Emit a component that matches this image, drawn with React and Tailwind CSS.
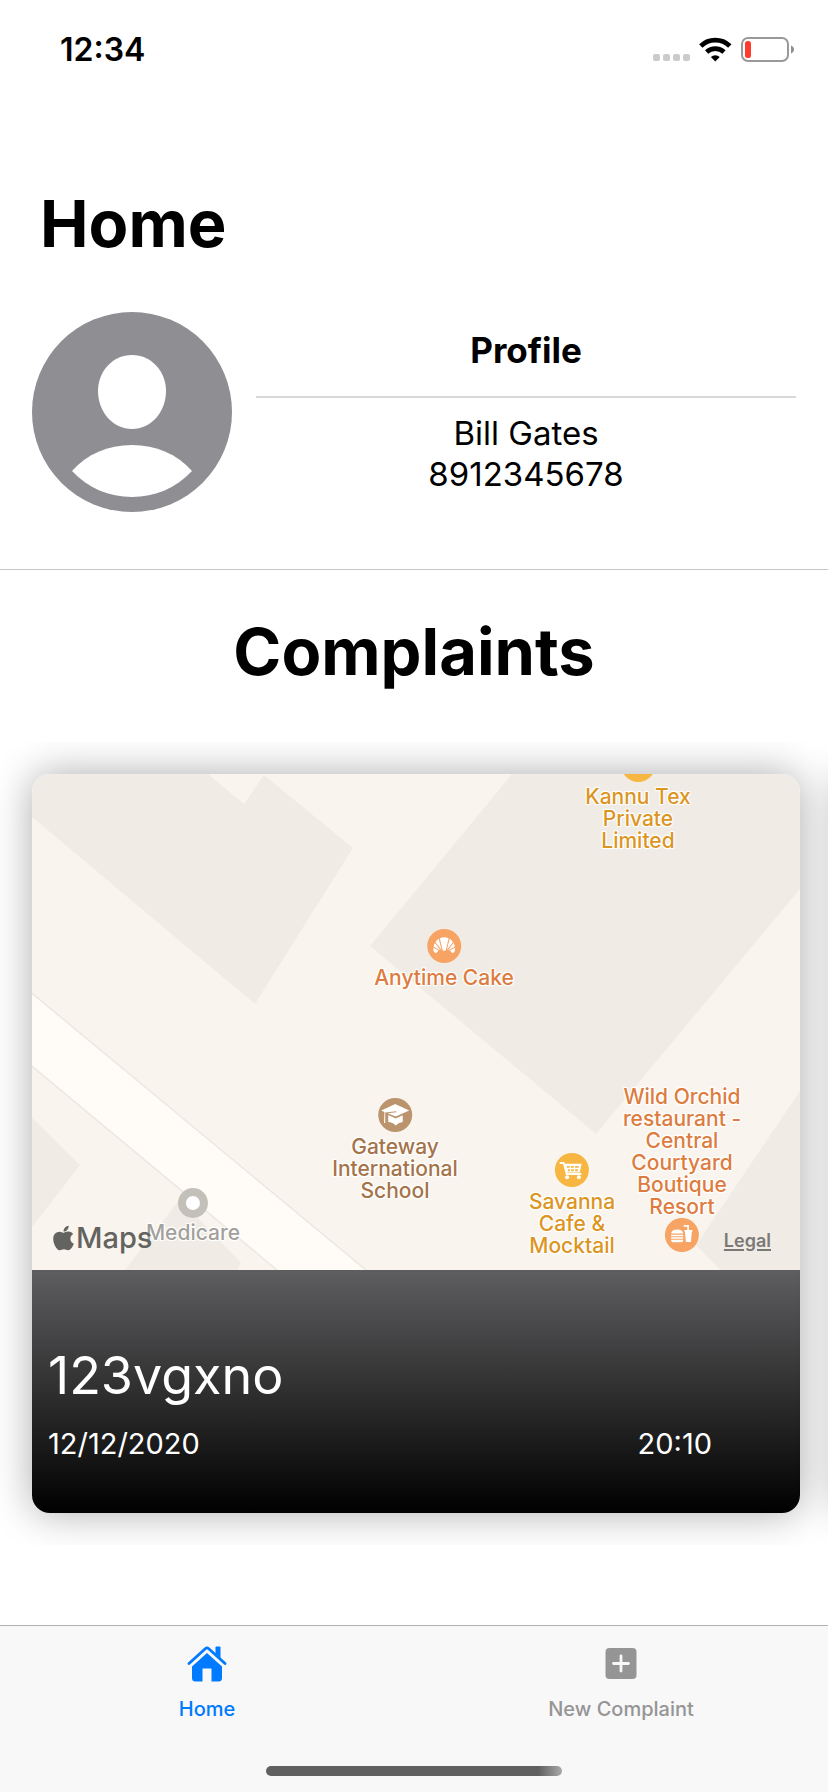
import React from "react";
import { FaApple } from "react-icons/fa";

function StatusBar() {
  return (
    <div className="flex h-[100px] items-center justify-between pl-[60px] pr-[34px]">
      <span className="text-[32px] leading-[36px] font-semibold">12:34</span>
      <svg className="h-[26px] w-[142px]" viewBox="0 1 142 26" role="img" aria-label="No signal, Wi-Fi, low battery">
        <g fill="#cbcbcb">
          <rect x="1" y="18" width="7" height="7" rx="2" />
          <rect x="11" y="18" width="7" height="7" rx="2" />
          <rect x="21" y="18" width="7" height="7" rx="2" />
          <rect x="31" y="18" width="7" height="7" rx="2" />
        </g>
        <g fill="none" stroke="#000" strokeWidth="4.8">
          <path d="M48.800 10a21 21 0 0 1 29 0" />
          <path d="M54.600 16a13 13 0 0 1 17.400 0" />
        </g>
        <path d="M63.300 25.500l-4.400-4.600a6.600 6.600 0 0 1 8.800 0z" />
        <rect x="90" y="2" width="46" height="23" rx="6" fill="none" stroke="#999" strokeWidth="2" />
        <path d="M139 9.500c4 1.600 4 6.400 0 8z" fill="#8f8f8f" />
        <rect x="93" y="5" width="6" height="17" rx="2.500" fill="#ff3b30" />
      </svg>
    </div>
  );
}

function Avatar() {
  return (
    <svg className="size-[200px] shrink-0" viewBox="0 0 200 200" role="img" aria-label="Profile picture">
      <circle cx="100" cy="100" r="100" fill="#8e8e93" />
      <path d="M100 43c19 0 34 16 34 36 0 21-15 38-34 38S66 100 66 79c0-20 15-36 34-36z" fill="#fff" />
      <path d="M40 159c15-17 36-26 60-26s45 9 60 26c-16 17-37 26-60 26s-44-9-60-26z" fill="#fff" />
    </svg>
  );
}

function CroissantGlyph() {
  return (
    <svg className="size-[34px]" viewBox="0 0 34 34" fill="#fff" aria-hidden="true">
      <path d="M12.600 9.300Q17 7.300 21.400 9.300L18.600 21.200Q17 22.200 15.400 21.200z" />
      <path d="M11.500 9.800L14.300 20.800 8.300 13.300q1-2.500 3.200-3.500zM22.500 9.800L19.700 20.800 25.700 13.300q-1-2.500-3.200-3.500z" />
      <path d="M7.700 14l5.700 7.400-6.900-3.600q0-2.300 1.200-3.800zM26.300 14l-5.700 7.400 6.900-3.600q0-2.300-1.200-3.800z" />
      <path d="M6.200 18.700l5 2.600q-1 2.700-2.700 2.900-2.900-1.500-2.300-5.500zM27.800 18.700L22.800 21.300q1 2.700 2.700 2.900 2.900-1.500 2.300-5.500z" />
    </svg>
  );
}

function CapGlyph() {
  return (
    <svg className="size-[34px]" viewBox="0 0 34 34" fill="#fff" aria-hidden="true">
      <path d="M17 6L31 12.500 17.500 18.500 9.500 15.200 18 14.200V13.200L7 14.400V25H5.800L6.200 14 3 12.500z" />
      <path d="M10 17l7.500 3.400 7-3.200V24q-4 .2-7 3.600-3-3.400-7.500-3.600z" />
    </svg>
  );
}

function CartGlyph() {
  return (
    <svg className="size-[34px]" viewBox="0 0 34 34" aria-hidden="true">
      <path d="M5.500 10h3.300l3 11h14" fill="none" stroke="#fff" strokeWidth="1.800" strokeLinecap="round" strokeLinejoin="round" />
      <path d="M9.500 10.700h17.200l-1.900 8.800H12z" fill="#fff" />
      <g stroke="#f7b641" strokeWidth="1.900">
        <path d="M12 13.900h2.600M16 13.900h2.800M20.200 13.900h3.600M13 17.300h2M16.200 17.300h2.600M20.200 17.300h2.800" />
      </g>
      <circle cx="12.200" cy="24.200" r="2" fill="#fff" />
      <circle cx="24" cy="24.200" r="2" fill="#fff" />
    </svg>
  );
}

function BurgerGlyph() {
  return (
    <svg className="size-[34px]" viewBox="0 0 34 34" fill="#fff" aria-hidden="true">
      <path d="M6.300 15.600q.5-4 6-4t6 4z" />
      <rect x="6" y="16.700" width="12.600" height="1.500" rx=".7" />
      <rect x="6" y="19.200" width="12.600" height="1.500" rx=".7" />
      <path d="M6.300 21.700h12v.8q0 1.700-1.700 1.700H8q-1.700 0-1.700-1.700z" />
      <path d="M19.500 12h8v1.600h-.5l-1 10.400h-5l-1-10.400h-.5z" />
      <path d="M18.800 7.900h4.400v4" fill="none" stroke="#fff" strokeWidth="1.700" />
    </svg>
  );
}

const halo =
  "[text-shadow:0_0_2px_#fff,1px_1px_1px_#fff,-1px_-1px_1px_#fff,1px_-1px_1px_#fff,-1px_1px_1px_#fff]";

function Place({ position, color, badge, glyph, lines, badgeLast = false }) {
  return (
    <div
      className={`absolute flex -translate-x-1/2 items-center ${badgeLast ? "flex-col-reverse" : "flex-col gap-1"} ${position}`}
    >
      <span className={`size-[34px] rounded-full ${badge}`}>{glyph}</span>
      <span className={`text-center text-[21px] leading-[22px] font-medium whitespace-nowrap ${halo} ${color}`}>
        {lines.map((line) => (
          <span key={line} className="block">
            {line}
          </span>
        ))}
      </span>
    </div>
  );
}

function MapView() {
  return (
    <div className="relative h-[496px] overflow-hidden bg-[#f9f5ee]">
      <svg className="block h-full w-full" viewBox="0 0 768 496" preserveAspectRatio="xMinYMin slice" aria-hidden="true">
        <g fill="#f0ece5">
          <path d="M0 0H176L212 30 232 1 321 74 223 230 0 43z" />
          <path d="M480 0H768V115L564 360 338 172z" />
          <path d="M768 317L664 471 688 496H768z" />
          <path d="M0 344L48 391 0 453z" />
          <path d="M93 496L148 425 209 489 205 496z" />
        </g>
        <path d="M-4 216L334 496H245L-4 289z" fill="#fffcf7" />
        <path d="M-4 216L334 496M-4 289L245 496" fill="none" stroke="#ece8e0" strokeWidth="1.500" />
      </svg>
      <Place position="left-[606px] -top-[26px]" color="text-[#dc951f]" badge="bg-[#f7b641]" lines={["Kannu Tex", "Private", "Limited"]} />
      <Place position="left-[412px] top-[155px]" color="text-[#dd7c3e]" badge="bg-[#f7a364]" glyph={<CroissantGlyph />} lines={["Anytime Cake"]} />
      <Place position="left-[363px] top-[324px]" color="text-[#a4734a]" badge="bg-[#bb946d]" glyph={<CapGlyph />} lines={["Gateway", "International", "School"]} />
      <Place position="left-[540px] top-[379px]" color="text-[#dc951f]" badge="bg-[#f7b641]" glyph={<CartGlyph />} lines={["Savanna", "Cafe &", "Mocktail"]} />
      <Place
        position="left-[650px] top-[312px]"
        color="text-[#dd7c3e]"
        badge="bg-[#f7a364]"
        glyph={<BurgerGlyph />}
        lines={["Wild Orchid", "restaurant -", "Central", "Courtyard", "Boutique", "Resort"]}
        badgeLast
      />
      <div className="absolute left-[161px] top-[414px] flex -translate-x-1/2 flex-col items-center gap-1">
        <span className="size-[30px] rounded-full border-8 border-[#c3c0ba] bg-white" />
        <span className={`text-[21px] leading-[22px] font-medium text-[#a3a09b] ${halo}`}>Medicare</span>
      </div>
      <div className="absolute bottom-[14px] left-[21px] flex items-center gap-[2px] text-[#63635f]">
        <FaApple className="h-7 w-[21px]" aria-hidden="true" />
        <span className="text-[29px] leading-[36px] font-medium">Maps</span>
      </div>
      <a href="#legal" className="absolute right-[29px] bottom-[18px] text-[18px] leading-[22px] font-semibold text-[#7b7975] underline decoration-2 underline-offset-2">
        Legal
      </a>
    </div>
  );
}

const cardFrame = "shrink-0 overflow-hidden rounded-[18px] shadow-[0_0_40px_rgba(0,0,0,0.33)]";

function ComplaintCard() {
  return (
    <article className={`w-[calc(100%-28px)] ${cardFrame}`}>
      <MapView />
      <div className="flex h-[243px] flex-col justify-end bg-linear-to-b/srgb from-[#5e5e60] to-black px-4 pb-[50px] text-white">
        <h3 className="text-[52px] leading-[66px]">123vgxno</h3>
        <div className="mt-4 flex justify-between pr-[72px] text-[29px] leading-[38px]">
          <span>12/12/2020</span>
          <span>20:10</span>
        </div>
      </div>
    </article>
  );
}

function HouseIcon() {
  return (
    <svg className="h-[36px] w-[40px]" viewBox="0 0 40 36" aria-hidden="true">
      <path d="M28.500 1.500q0-1 1-1h3q1 0 1 1V14l-5-4.500z" fill="currentColor" />
      <path d="M2 17.500L18.500 2.500q1.500-1.200 3 0L38 17.500" fill="none" stroke="currentColor" strokeWidth="2.800" strokeLinecap="round" />
      <path d="M20 7L35 20.500v11.500q0 3.500-3.500 3.500H24.500V22.500h-9v13H8.500Q5 35.500 5 32V20.500z" fill="currentColor" />
    </svg>
  );
}

function PlusIcon() {
  return (
    <svg className="h-[36px] w-[32px]" viewBox="0 0 32 36" aria-hidden="true">
      <rect x=".5" y="2" width="31" height="31" rx="4" fill="currentColor" />
      <path d="M16 10v15M8.500 17.500h15" stroke="#f8f8f8" strokeWidth="2.800" strokeLinecap="round" />
    </svg>
  );
}

function TabBar() {
  const tab = "flex flex-col items-center gap-[15px] pt-5 text-[20px] leading-[24px] font-medium";
  return (
    <footer className="mt-auto border-t border-[#b2b2b2] bg-[#f8f8f8]">
      <nav className="grid h-[140px] grid-cols-2">
        <button type="button" aria-current="page" className={`${tab} text-[#007aff]`}>
          <HouseIcon />
          Home
        </button>
        <button type="button" className={`${tab} text-[#959595]`}>
          <PlusIcon />
          New Complaint
        </button>
      </nav>
      <div className="flex h-[26px] items-start justify-center">
        <div className="h-[10px] w-[296px] rounded-full bg-linear-to-r from-[#606060] from-92% to-[#aaaaaa]" />
      </div>
    </footer>
  );
}

export default function App() {
  return (
    <div className="flex min-h-screen flex-col overflow-x-hidden bg-white font-['Inter','Liberation_Sans',sans-serif] text-black">
      <StatusBar />
      <main>
        <h1 className="px-[40px] pt-[84px] text-[65px] leading-[80px] font-bold">Home</h1>
        <section className="flex gap-6 border-b border-[#c6c6c8] px-8 pt-12 pb-[57px]">
          <Avatar />
          <div className="flex-1 pt-[14px] text-center text-[33px] leading-[41px]">
            <h2 className="pb-[22px] text-[35px] leading-[48px] font-bold">Profile</h2>
            <div className="border-t-2 border-[#d8d8da] pt-[15px]">
              <p>Bill Gates</p>
              <p>8912345678</p>
            </div>
          </div>
        </section>
        <section>
          <h2 className="pt-[42px] pb-[50px] text-center text-[65px] leading-[80px] font-bold">Complaints</h2>
          <div className="flex gap-10 overflow-hidden py-8 pl-8">
            <ComplaintCard />
            <article className={`w-full bg-[#f9f5ee] ${cardFrame}`} aria-hidden="true" />
          </div>
        </section>
      </main>
      <TabBar />
    </div>
  );
}
